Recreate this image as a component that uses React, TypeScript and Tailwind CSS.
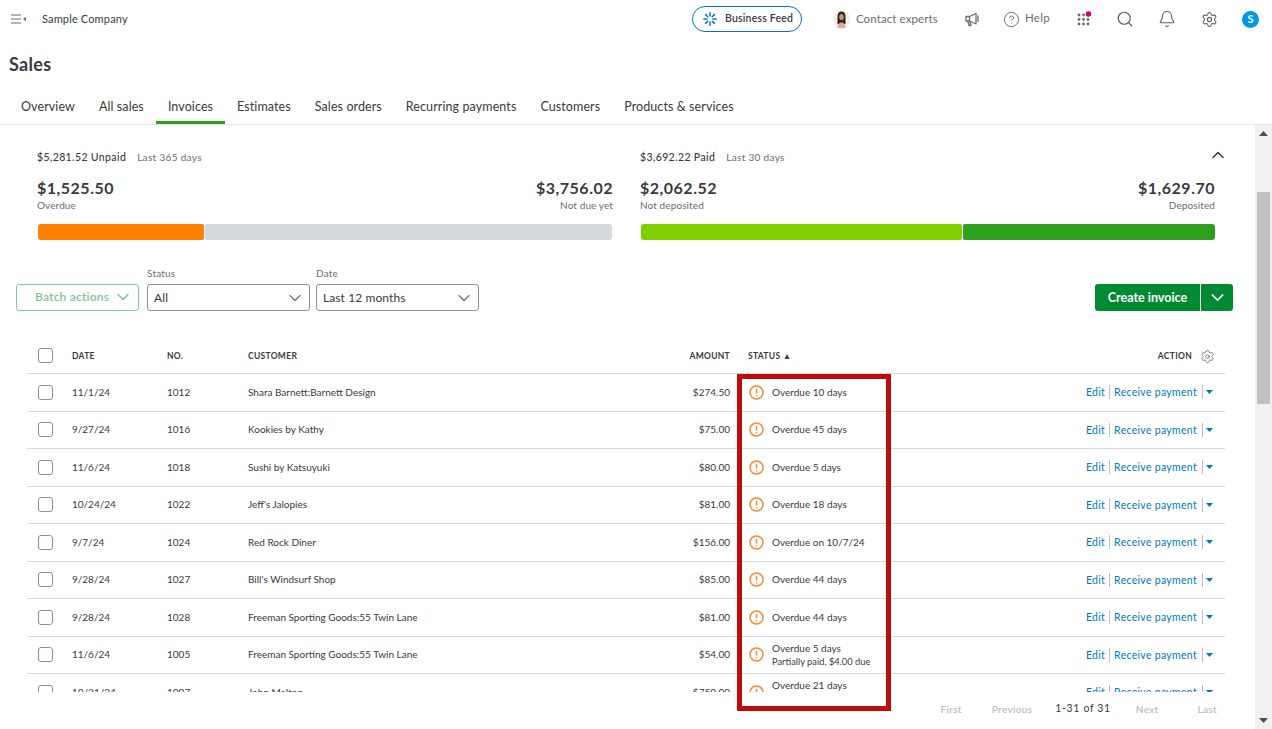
import React from "react";
import { CircleHelp, Search, Bell, Settings, ChevronDown, ChevronUp } from "lucide-react";

const rows = [
  ["11/1/24", "1012", "Shara Barnett:Barnett Design", "$274.50", "Overdue 10 days", ""],
  ["9/27/24", "1016", "Kookies by Kathy", "$75.00", "Overdue 45 days", ""],
  ["11/6/24", "1018", "Sushi by Katsuyuki", "$80.00", "Overdue 5 days", ""],
  ["10/24/24", "1022", "Jeff's Jalopies", "$81.00", "Overdue 18 days", ""],
  ["9/7/24", "1024", "Red Rock Diner", "$156.00", "Overdue on 10/7/24", ""],
  ["9/28/24", "1027", "Bill's Windsurf Shop", "$85.00", "Overdue 44 days", ""],
  ["9/28/24", "1028", "Freeman Sporting Goods:55 Twin Lane", "$81.00", "Overdue 44 days", ""],
  ["11/6/24", "1005", "Freeman Sporting Goods:55 Twin Lane", "$54.00", "Overdue 5 days", "Partially paid, $4.00 due"],
  ["10/21/24", "1007", "John Melton", "$750.00", "Overdue 21 days", "Partially paid, $450.00 due"],
];

const tabs = ["Overview", "All sales", "Invoices", "Estimates", "Sales orders", "Recurring payments", "Customers", "Products & services"];

function Box() {
  return <div className="w-[15px] h-[15px] rounded-[3px] border border-[#8d9096] bg-white" />;
}

function Warn() {
  return (
    <svg width="15" height="15" viewBox="0 0 15 15" className="shrink-0">
      <circle cx="7.5" cy="7.5" r="6.5" fill="none" stroke="#f58a3c" strokeWidth="1.5" />
      <path d="M7.5 3.8v4.6M7.5 10.2v1.2" stroke="#f58a3c" strokeWidth="1.5" />
    </svg>
  );
}

function Apps() {
  const dots = [];
  for (let y = 0; y < 3; y++) for (let x = 0; x < 3; x++) dots.push(<circle key={`${x}${y}`} cx={2 + x * 4.5} cy={4 + y * 4.5} r="1.4" fill="#6b6c72" />);
  return (
    <svg width="16" height="17" viewBox="0 0 16 17">
      {dots}
      <circle cx="11.5" cy="3" r="2.8" fill="#d6006e" />
    </svg>
  );
}

function Feed() {
  return (
    <svg width="14" height="14" viewBox="0 0 14 14" fill="none" stroke="#0077c5" strokeWidth="1.5" strokeLinecap="round">
      <path d="M7 .8v3.2M7 10v3.2M.8 7H4M10 7h3.2M2.6 2.6l2.2 2.2M9.2 9.2l2.2 2.2M2.6 11.4l2.2-2.2M9.2 4.8l2.2-2.2" />
    </svg>
  );
}

function Avatar() {
  return (
    <svg width="17" height="19" viewBox="0 0 17 19" className="shrink-0">
      <ellipse cx="8.5" cy="9.500" rx="8.500" ry="9.500" fill="#f4eeea" />
      <path d="M4.500 14V6.500C4.500 3 6 1.500 8.500 1.500S12.500 3 12.500 6.500V14z" fill="#33241f" />
      <ellipse cx="8.500" cy="7" rx="2.300" ry="3.100" fill="#c99378" />
      <path d="M4.500 18c0-4 2-5.500 4-5.500s4 1.500 4 5.500z" fill="#dba9a6" />
    </svg>
  );
}

function Horn() {
  return (
    <svg width="14" height="15" viewBox="0 0 14 15" fill="none" stroke="#6b6c72" strokeWidth="1.300" strokeLinejoin="round">
      <path d="M1 4.500h3.500L11 1.500v10.500L4.500 9H1z" />
      <path d="M4.500 4.500V9M2.800 9l1.200 4.500h2L5 9.500M13 3.500v6.500" />
    </svg>
  );
}

function Stat({ left, sub, leftVal, leftLabel, rightVal, rightLabel, w1, w2, w3, c1, c2 }: { left: string; sub: string; leftVal: string; leftLabel: string; rightVal: string; rightLabel: string; w1: string; w2: string; w3: string; c1: string; c2: string }) {
  return (
    <div className={w1}>
      <div className="flex gap-[11px] h-[14px] leading-[14px] text-[#393a3d]">
        <span className="text-[10.500px] tracking-[0.37px] font-medium">{left}</span>
        <span className="text-[10px] tracking-[0.33px] text-[#6b6c72]">{sub}</span>
      </div>
      <div className="flex justify-between mt-[14px]">
        <div>
          <div className="text-[16px] leading-[20px] font-bold text-[#393a3d] tracking-[0.5px]">{leftVal}</div>
          <div className="text-[10px] tracking-[0.1px] leading-[13px] mt-[1px] text-[#6b6c72]">{leftLabel}</div>
        </div>
        <div className="text-right">
          <div className="text-[16px] leading-[20px] font-bold text-[#393a3d] tracking-[0.5px]">{rightVal}</div>
          <div className="text-[10px] tracking-[0.1px] leading-[13px] mt-[1px] text-[#6b6c72]">{rightLabel}</div>
        </div>
      </div>
      <div className="flex gap-[1px] mt-[12px] h-[16px] pl-[1px]">
        <div className={`${w2} ${c1} rounded-l-[3px] rounded-r-[2px]`} />
        <div className={`${w3} ${c2} rounded-r-[3px] rounded-l-[2px]`} />
      </div>
    </div>
  );
}

function Select({ label, value }: { label: string; value: string }) {
  return (
    <div className="w-[163px]">
      <div className="text-[10px] tracking-[0.2px] leading-[14px] h-[18px] text-[#6b6c72]">{label}</div>
      <div className="h-[27px] rounded-[3px] border border-[#8d9096] flex items-center justify-between pl-[6px] pr-[4px] text-[12px] tracking-[0.1px] text-[#393a3d]">
        <span>{value}</span>
        <ChevronDown size={20} strokeWidth={1.4} className="text-[#6b6c72]" />
      </div>
    </div>
  );
}

export default function App() {
  return (
    <div className="relative w-[1272px] h-[729px] overflow-hidden bg-white flex flex-col font-[Lato,sans-serif] text-[#393a3d]">
      <header className="h-[38px] flex items-center shrink-0">
        <svg width="17" height="12" viewBox="0 0 17 12" className="ml-[10px]" fill="none" stroke="#6b6c72" strokeWidth="1.200">
          <path d="M1 2h10M1 6h10M1 10h10" />
          <path d="M16 3.800v4.400L13 6z" fill="#6b6c72" stroke="none" />
        </svg>
        <span className="ml-[15px] text-[11px] tracking-[0.15px] text-[#393a3d]">Sample Company</span>
        <div className="flex-1" />
        <div className="w-[110px] h-[26px] rounded-full border border-[#0077c5] flex items-center gap-[8px] pl-[10px] text-[10.500px] font-semibold tracking-[0.2px] text-[#393a3d]">
          <Feed />
          <span>Business Feed</span>
        </div>
        <div className="ml-[31px] w-[105px] flex items-center gap-[6px] text-[11.500px] tracking-[0.1px] text-[#6b6c72] whitespace-nowrap">
          <Avatar />
          <span>Contact experts</span>
        </div>
        <div className="ml-[27px]"><Horn /></div>
        <div className="ml-[24px] flex items-center gap-[5px] text-[11.500px] tracking-[0.3px] text-[#6b6c72]">
          <CircleHelp size={17} strokeWidth={1.4} />
          <span className="-translate-y-[1px]">Help</span>
        </div>
        <div className="ml-[27px]"><Apps /></div>
        <Search size={18} strokeWidth={1.6} className="ml-[23px] text-[#5f6066]" />
        <Bell size={18} strokeWidth={1.5} className="ml-[24px] text-[#5f6066]" />
        <Settings size={17} strokeWidth={1.5} className="ml-[25px] text-[#5f6066]" />
        <div className="ml-[24px] mr-[13px] w-[17px] h-[17px] rounded-full bg-[#0097e6] text-white text-[11px] font-bold flex items-center justify-center">S</div>
      </header>

      <h1 className="pl-[9px] h-[50px] pt-[13px] text-[18px] leading-[26px] font-bold tracking-[0.3px] text-[#393a3d] shrink-0">Sales</h1>

      <nav className="h-[37px] pl-[9px] flex border-b border-[#e3e5e8] shrink-0">
        {tabs.map((t) => (
          <div key={t} className={`px-[12px] h-[36px] pt-[10px] text-[12.500px] tracking-[0.09px] leading-[18px] text-[#393a3d] ${t === "Invoices" ? "border-b-[3px] border-[#2ca01c]" : ""}`}>{t}</div>
        ))}
      </nav>

      <div className="flex-1 flex min-h-0">
        <main className="flex-1 min-w-0 flex flex-col">
          <section className="relative flex pl-[37px] pt-[25px] gap-[27px] shrink-0">
            <Stat left="$5,281.52 Unpaid" sub="Last 365 days" leftVal="$1,525.50" leftLabel="Overdue" rightVal="$3,756.02" rightLabel="Not due yet" w1="w-[576px]" w2="w-[166px]" w3="w-[407px]" c1="bg-[#ff8000]" c2="bg-[#d4d7dc]" />
            <Stat left="$3,692.22 Paid" sub="Last 30 days" leftVal="$2,062.52" leftLabel="Not deposited" rightVal="$1,629.70" rightLabel="Deposited" w1="w-[575px]" w2="w-[321px]" w3="w-[252px]" c1="bg-[#7fd000]" c2="bg-[#2ca01c]" />
            <ChevronUp size={20} strokeWidth={1.7} className="absolute right-[27px] top-[20px] text-[#393a3d]" />
          </section>

          <section className="flex items-end pl-[16px] pr-[22px] mt-[26px] shrink-0">
            <div className="w-[123px] h-[27px] pb-[2px] rounded-[3px] border border-[#7fcf9a] flex items-center pl-[18px] gap-[4px] text-[12px] font-semibold tracking-[0.2px] text-[#7cc796]">
              <span>Batch actions</span>
              <ChevronDown size={20} strokeWidth={1.7} />
            </div>
            <div className="ml-[8px]"><Select label="Status" value="All" /></div>
            <div className="ml-[6px]"><Select label="Date" value="Last 12 months" /></div>
            <div className="flex-1" />
            <div className="flex h-[27px] rounded-[3px] overflow-hidden bg-[#028a33] text-white">
              <div className="w-[105px] pt-[2px] flex items-center justify-center text-[12.500px] font-bold">Create invoice</div>
              <div className="w-[1px] bg-white" />
              <div className="w-[32px] flex items-center justify-center"><ChevronDown size={21} strokeWidth={1.8} /></div>
            </div>
          </section>

          <section className="ml-[27px] mr-[30px] mt-[25px] h-[356px] overflow-hidden shrink-0">
            <div className="h-[38px] pt-[2px] border-b border-[#d4d7dc] grid grid-cols-[45px_95px_81px_392px_90px_1fr] items-center text-[8.500px] font-bold tracking-[0.3px] text-[#393a3d]">
              <div className="pl-[11px]"><Box /></div>
              <div className="pt-[1px]">DATE</div>
              <div className="pt-[1px]">NO.</div>
              <div className="pt-[1px]">CUSTOMER</div>
              <div className="pt-[1px] text-right">AMOUNT</div>
              <div className="pt-[1px] flex items-center justify-between pl-[18px] pr-[10px]">
                <span>STATUS ▲</span>
                <span className="flex items-center gap-[8px]">ACTION <Settings size={15} strokeWidth={1.3} className="text-[#6b6c72]" /></span>
              </div>
            </div>
            {rows.map((r, i) => (
              <div key={i} className="h-[37.500px] border-b border-[#d4d7dc] grid grid-cols-[45px_95px_81px_392px_90px_1fr] items-center text-[10px] text-[#393a3d]">
                <div className="pl-[11px]"><Box /></div>
                <div>{r[0]}</div>
                <div>{r[1]}</div>
                <div>{r[2]}</div>
                <div className="text-right">{r[3]}</div>
                <div className="flex items-center justify-between pl-[19px] pr-[12px]">
                  <div className="flex items-center gap-[8px]">
                    <Warn />
                    <div>
                      <div className="leading-[13px]">{r[4]}</div>
                      {r[5] && <div className="text-[9.300px] leading-[13px]">{r[5]}</div>}
                    </div>
                  </div>
                  <div className="flex items-center text-[10.500px] leading-[14px] tracking-[0.3px] text-[#0077c5]">
                    <span className="pr-[4px]">Edit</span>
                    <span className="h-[14px] border-l border-[#babec5] pl-[4px] pr-[5px]">Receive payment</span>
                    <span className="h-[14px] border-l border-[#babec5] pl-[3px] flex items-center">
                      <svg width="7" height="4" viewBox="0 0 7 4"><path d="M0 0h7L3.500 4z" fill="#0077c5" /></svg>
                    </span>
                  </div>
                </div>
              </div>
            ))}
          </section>

          <footer className="flex-1 flex items-center justify-end pr-[38px] text-[10px] tracking-[0.3px] text-[#babec5] font-semibold pb-[3px]">
            <span>First</span>
            <span className="ml-[30px]">Previous</span>
            <span className="ml-[23px] text-[10.500px] tracking-[0.65px] text-[#393a3d] font-normal">1-31 of 31</span>
            <span className="ml-[25px]">Next</span>
            <span className="ml-[39px]">Last</span>
          </footer>
        </main>

        <aside className="w-[17px] bg-[#f1f1f1] shrink-0 flex flex-col items-center relative">
          <svg width="9" height="5" viewBox="0 0 9 5" className="mt-[6px]"><path d="M0 5 4.500 0 9 5z" fill="#505050" /></svg>
          <div className="mt-[56px] w-[13px] h-[212px] bg-[#c1c1c1]" />
          <div className="flex-1" />
          <svg width="9" height="5" viewBox="0 0 9 5" className="mb-[6px]"><path d="M0 0 4.500 5 9 0z" fill="#505050" /></svg>
        </aside>
      </div>

      <div className="absolute left-[737px] top-[374px] w-[154px] h-[337px] border-[5px] border-[#c00a0e] pointer-events-none" />
    </div>
  );
}
